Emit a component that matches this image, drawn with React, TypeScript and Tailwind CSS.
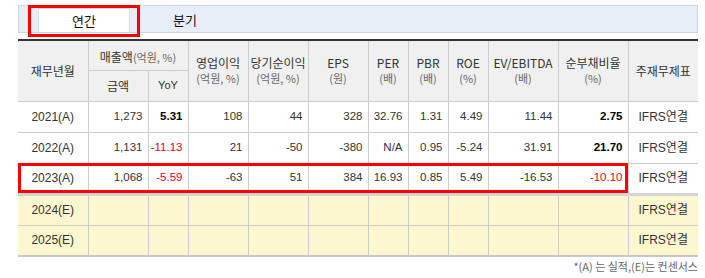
import React from "react";

type Cell = { v: string; c?: "red" | "bold" };

const rows: { label: string; est?: boolean; cells: Cell[] }[] = [
  {
    label: "2021(A)",
    cells: [
      { v: "1,273" }, { v: "5.31", c: "bold" }, { v: "108" }, { v: "44" }, { v: "328" },
      { v: "32.76" }, { v: "1.31" }, { v: "4.49" }, { v: "11.44" }, { v: "2.75", c: "bold" },
    ],
  },
  {
    label: "2022(A)",
    cells: [
      { v: "1,131" }, { v: "-11.13", c: "red" }, { v: "21" }, { v: "-50" }, { v: "-380" },
      { v: "N/A" }, { v: "0.95" }, { v: "-5.24" }, { v: "31.91" }, { v: "21.70", c: "bold" },
    ],
  },
  {
    label: "2023(A)",
    cells: [
      { v: "1,068" }, { v: "-5.59", c: "red" }, { v: "-63" }, { v: "51" }, { v: "384" },
      { v: "16.93" }, { v: "0.85" }, { v: "5.49" }, { v: "-16.53" }, { v: "-10.10", c: "red" },
    ],
  },
  { label: "2024(E)", est: true, cells: Array.from({ length: 10 }, () => ({ v: "" })) },
  { label: "2025(E)", est: true, cells: Array.from({ length: 10 }, () => ({ v: "" })) },
];

const widths = [70, 60, 40, 60, 60, 60, 40, 40, 40, 70, 70, 70];

const kr = "font-['Noto_Sans_CJK_KR','Noto_Sans',sans-serif]";
const num = "font-['Liberation_Sans','Noto_Sans_CJK_KR',sans-serif]";

function Head2({ a, b }: { a: string; b: string }) {
  return (
    <th
      rowSpan={2}
      className="border border-[#cccccc] bg-[#f0f0f0] font-normal align-middle text-center leading-[14px] p-0"
    >
      <div className="text-[12px] text-[#333]">{a}</div>
      <div className="text-[11px] text-[#666] mt-[1px]">{b}</div>
    </th>
  );
}

export default function App() {
  return (
    <div className={`w-[705px] h-[278px] bg-white ${kr}`}>
      <div className="pl-[18px] pt-[5px] w-[698px]">
        {/* tab bar */}
        <div className="relative h-[28px] border border-[#ccd6e6] bg-[#e8eef8] flex items-end">
          <div className="ml-[19px] w-[92px] h-[24px] bg-white border-x border-t border-[#d5dce8] flex items-center justify-center text-[13px] text-[#111]">
            연간
          </div>
          <div className="ml-[9px] w-[92px] h-[24px] flex items-center justify-center text-[13px] text-[#111]">
            분기
          </div>
          <div className="absolute left-[9px] top-[-1px] w-[112px] h-[32px] border-[3px] border-[#ff0000]" />
        </div>

        {/* table */}
        <div className="relative mt-[6px]">
          <table className="table-fixed border-collapse w-[680px] border-t-2 border-t-[#333] border-b-2 border-b-[#c8c8c8]">
            <colgroup>
              {widths.map((w, i) => (
                <col key={i} style={{ width: w }} />
              ))}
            </colgroup>
            <thead>
              <tr className="h-[30px]">
                <th
                  rowSpan={2}
                  className="border border-[#cccccc] border-l-0 bg-[#f0f0f0] font-normal text-[12px] text-[#333] text-center"
                >
                  재무년월
                </th>
                <th
                  colSpan={2}
                  className="border border-[#cccccc] bg-[#f0f0f0] font-normal text-center whitespace-nowrap"
                >
                  <span className="text-[12px] text-[#333]">매출액</span>
                  <span className="text-[11px] text-[#666]">(억원, %)</span>
                </th>
                <Head2 a="영업이익" b="(억원, %)" />
                <Head2 a="당기순이익" b="(억원, %)" />
                <Head2 a="EPS" b="(원)" />
                <Head2 a="PER" b="(배)" />
                <Head2 a="PBR" b="(배)" />
                <Head2 a="ROE" b="(%)" />
                <Head2 a="EV/EBITDA" b="(배)" />
                <Head2 a="순부채비율" b="(%)" />
                <th
                  rowSpan={2}
                  className="border border-[#cccccc] border-r-0 bg-[#f0f0f0] font-normal text-[12px] text-[#333] text-center"
                >
                  주재무제표
                </th>
              </tr>
              <tr className="h-[31px]">
                <th className="border border-[#cccccc] bg-[#f0f0f0] font-normal text-[12px] text-[#333] text-center">
                  금액
                </th>
                <th className={`border border-[#cccccc] bg-[#f0f0f0] font-normal text-[11px] text-[#333] text-center ${num}`}>
                  YoY
                </th>
              </tr>
            </thead>
            <tbody>
              {rows.map((r, ri) => (
                <tr
                  key={r.label}
                  className={`h-[31px] ${r.est ? "bg-[#fcf7cf]" : "bg-white"} ${
                    ri === 3 ? "border-t-[3px] border-t-[#d4d4d4]" : ""
                  }`}
                >
                  <td className={`border border-[#cccccc] border-l-0 text-center text-[12px] text-[#333] ${num}`}>
                    {r.label}
                  </td>
                  {r.cells.map((c, ci) => (
                    <td
                      key={ci}
                      className={`border border-[#cccccc] text-right pr-[5px] text-[11.5px] ${num} ${
                        c.c === "red"
                          ? "text-[#e4001b]"
                          : c.c === "bold"
                          ? "text-black font-bold"
                          : "text-[#333]"
                      }`}
                    >
                      {c.v}
                    </td>
                  ))}
                  <td className={`border border-[#cccccc] border-r-0 text-center text-[12px] text-[#333] whitespace-nowrap ${num}`}>
                    IFRS연결
                  </td>
                </tr>
              ))}
            </tbody>
          </table>
          <div className="absolute left-0 top-[124px] w-[610px] h-[30px] border-[3px] border-[#ff0000]" />
        </div>
        <div className="flex justify-end mt-[2px] text-[11px] text-[#666] leading-[14px]">
          *(A) 는 실적,(E)는 컨센서스
        </div>
      </div>
    </div>
  );
}
